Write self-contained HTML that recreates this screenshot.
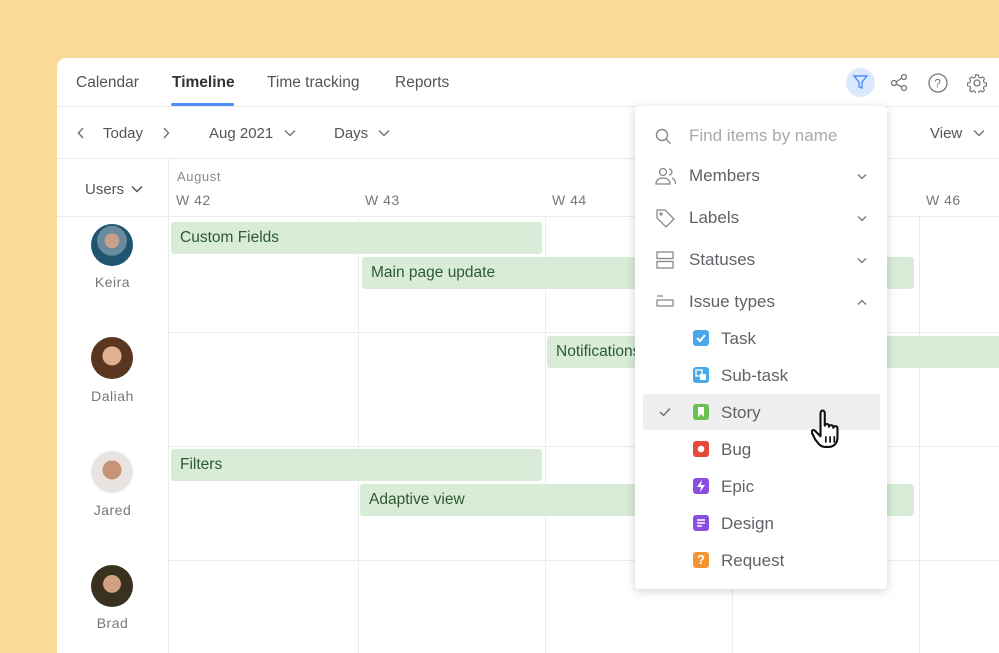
<!DOCTYPE html>
<html><head><style>
*{margin:0;padding:0;box-sizing:border-box}
body{width:999px;height:653px;overflow:hidden;background:#FBD996;font-family:"Liberation Sans",sans-serif;position:relative}
.card{position:absolute;left:57px;top:58px;width:950px;height:595px;background:#fff;border-radius:9px 9px 0 0;overflow:hidden}
.abs{position:absolute}
.t{position:absolute;color:#555;font-size:16px;white-space:nowrap}
.hl{position:absolute;height:1px;background:#ececec}
.vl{position:absolute;width:1px;background:#ececec}
.bar{position:absolute;background:#d8ecd8;border-radius:3px;color:#2d5a30;font-size:15.5px;padding-left:9px;line-height:32px;height:32px;white-space:nowrap;overflow:hidden}
.av{position:absolute;width:42px;height:42px;border-radius:50%}
.nm{position:absolute;width:111px;text-align:center;color:#777;font-size:14px;letter-spacing:.5px}
.dd{position:absolute;left:635px;top:106px;width:252px;height:483px;background:#fff;border-radius:4px;box-shadow:0 2px 10px rgba(0,0,0,.18)}
.di{position:absolute;left:54px;font-size:17px;color:#5f6368}
.ic{position:absolute;left:58px;width:16px;height:16px;border-radius:3px}
.chev{position:absolute;left:222px}
</style></head><body>
<div class="card">
 <div class="t" style="left:19px;top:16px;font-size:15.5px">Calendar</div>
 <div class="t" style="left:115px;top:16px;color:#333;font-weight:bold;font-size:15.5px">Timeline</div>
 <div class="abs" style="left:114px;top:45px;width:63px;height:3px;background:#4f8ef7;border-radius:2px"></div>
 <div class="t" style="left:210px;top:16px;font-size:15.5px">Time tracking</div>
 <div class="t" style="left:338px;top:16px;font-size:15.5px">Reports</div>
 <div class="abs" style="left:789px;top:10px;width:29px;height:29px;border-radius:50%;background:#dbe9fd"></div>
 <svg class="abs" style="left:795px;top:16px" width="17" height="17" viewBox="0 0 17 17"><path d="M2 2h13l-5 6v6l-3-1V8z" fill="none" stroke="#4f8ef7" stroke-width="1.4"/></svg>
 <svg class="abs" style="left:833px;top:15px" width="18" height="19" viewBox="0 0 18 19" fill="none" stroke="#777" stroke-width="1.3"><circle cx="4" cy="10" r="2.5"/><circle cx="14" cy="4" r="2.5"/><circle cx="14" cy="15" r="2.5"/><path d="M6 9l6-4M6 11l6 3"/></svg>
 <svg class="abs" style="left:871px;top:15px" width="20" height="20" viewBox="0 0 20 20" fill="none" stroke="#777" stroke-width="1.3"><circle cx="10" cy="10" r="9"/><text x="6.3" y="14.5" font-size="12" fill="#777" stroke="none" font-family="Liberation Sans">?</text></svg>
 <svg class="abs" style="left:910px;top:15px" width="20" height="20" viewBox="0 0 20 20" fill="none" stroke="#777" stroke-width="1.3"><circle cx="10" cy="10" r="3"/><path d="M8.5 1.5h3l.5 2.5 2 1 2.3-1.2 2 2-1.2 2.3 1 2 2.5.5v3l-2.5.5-1 2 1.2 2.3-2 2-2.3-1.2-2 1-.5 2.5h-3l-.5-2.5-2-1-2.3 1.2-2-2 1.2-2.3-1-2-2.5-.5v-3l2.5-.5 1-2-1.2-2.3 2-2 2.3 1.2 2-1z" transform="scale(.9) translate(1.1 .6)"/></svg>
 <div class="hl" style="left:0;top:48px;width:960px"></div>
 <svg class="abs" style="left:20px;top:69px" width="8" height="12" viewBox="0 0 8 12"><path d="M6 1L1.5 6 6 11" fill="none" stroke="#777" stroke-width="1.5"/></svg>
 <div class="t" style="left:46px;top:67px;font-size:15px">Today</div>
 <svg class="abs" style="left:105px;top:69px" width="8" height="12" viewBox="0 0 8 12"><path d="M2 1l4.5 5L2 11" fill="none" stroke="#777" stroke-width="1.5"/></svg>
 <div class="t" style="left:152px;top:67px;font-size:15px">Aug 2021</div>
 <svg class="abs" style="left:227px;top:71px" width="12" height="8" viewBox="0 0 12 8"><path d="M1 1.5l5 5 5-5" fill="none" stroke="#777" stroke-width="1.5"/></svg>
 <div class="t" style="left:277px;top:67px;font-size:15px">Days</div>
 <svg class="abs" style="left:321px;top:71px" width="12" height="8" viewBox="0 0 12 8"><path d="M1 1.5l5 5 5-5" fill="none" stroke="#777" stroke-width="1.5"/></svg>
 <div class="t" style="left:815px;top:67px;font-size:15px">s</div>
 <div class="t" style="left:873px;top:67px;font-size:15px">View</div>
 <svg class="abs" style="left:916px;top:71px" width="12" height="8" viewBox="0 0 12 8"><path d="M1 1.5l5 5 5-5" fill="none" stroke="#777" stroke-width="1.5"/></svg>
 <div class="hl" style="left:0;top:100px;width:960px"></div>
 <div class="vl" style="left:111px;top:100px;height:560px"></div>
 <div class="t" style="left:28px;top:123px;font-size:15px">Users</div>
 <svg class="abs" style="left:74px;top:127px" width="12" height="8" viewBox="0 0 12 8"><path d="M1 1.5l5 5 5-5" fill="none" stroke="#555" stroke-width="1.5"/></svg>
 <div class="t" style="left:120px;top:111px;font-size:13px;color:#888;letter-spacing:.6px">August</div>
 <div class="t" style="left:119px;top:134px;font-size:14px;color:#777;letter-spacing:.5px">W 42</div>
 <div class="t" style="left:308px;top:134px;font-size:14px;color:#777;letter-spacing:.5px">W 43</div>
 <div class="t" style="left:495px;top:134px;font-size:14px;color:#777;letter-spacing:.5px">W 44</div>
 <div class="t" style="left:869px;top:134px;font-size:14px;color:#777;letter-spacing:.5px">W 46</div>
 <div class="hl" style="left:0;top:158px;width:960px"></div>
 <div class="vl" style="left:301px;top:158px;height:500px"></div>
 <div class="vl" style="left:488px;top:158px;height:500px"></div>
 <div class="vl" style="left:675px;top:158px;height:500px"></div>
 <div class="vl" style="left:862px;top:158px;height:500px"></div>
 <div class="hl" style="left:111px;top:274px;width:850px"></div>
 <div class="hl" style="left:111px;top:388px;width:850px"></div>
 <div class="hl" style="left:111px;top:502px;width:850px"></div>
 <div class="av" style="left:34px;top:166px;background:radial-gradient(circle at 50% 40%,#c9a088 0 22%,#6a8aa0 23% 45%,#1f5570 46%)"></div>
 <div class="nm" style="left:0;top:216px">Keira</div>
 <div class="av" style="left:34px;top:279px;background:radial-gradient(circle at 50% 45%,#e0b090 0 30%,#5a3520 31%)"></div>
 <div class="nm" style="left:0;top:330px">Daliah</div>
 <div class="av" style="left:34px;top:393px;background:radial-gradient(circle at 50% 45%,#c89478 0 30%,#e9e4df 31%)"></div>
 <div class="nm" style="left:0;top:444px">Jared</div>
 <div class="av" style="left:34px;top:507px;background:radial-gradient(circle at 50% 45%,#d1a080 0 28%,#3a3020 29%)"></div>
 <div class="nm" style="left:0;top:557px">Brad</div>
 <div class="bar" style="left:114px;top:164px;width:371px">Custom Fields</div>
 <div class="bar" style="left:305px;top:199px;width:552px">Main page update</div>
 <div class="bar" style="left:490px;top:278px;width:480px">Notifications</div>
 <div class="bar" style="left:114px;top:391px;width:371px">Filters</div>
 <div class="bar" style="left:303px;top:426px;width:554px">Adaptive view</div>
</div>
<div class="dd">
 <svg class="abs" style="left:20px;top:22px" width="17" height="17" viewBox="0 0 17 17" fill="none" stroke="#888" stroke-width="1.4"><circle cx="7" cy="7" r="5.5"/><path d="M11 11l4.5 4.5"/></svg>
 <div class="di" style="top:20px;color:#aaa">Find items by name</div>
 <svg class="abs" style="left:20px;top:61px" width="22" height="18" viewBox="0 0 22 18" fill="none" stroke="#888" stroke-width="1.3"><circle cx="8" cy="5" r="3.5"/><path d="M1 17c0-4 3-6 7-6s7 2 7 6z"/><path d="M14 2a3 3 0 010 6M17 11c2 1 3.5 3 3.5 6"/></svg>
 <div class="di" style="top:60px">Members</div><svg class="chev" style="top:67px" width="10" height="7" viewBox="0 0 10 7"><path d="M1 1.5l4 4 4-4" fill="none" stroke="#777" stroke-width="1.3"/></svg>
 <svg class="abs" style="left:21px;top:103px" width="20" height="19" viewBox="0 0 20 19" fill="none" stroke="#888" stroke-width="1.3"><path d="M1 1h8l9 9-8 8-9-9z"/><circle cx="5" cy="5" r="1"/></svg>
 <div class="di" style="top:102px">Labels</div><svg class="chev" style="top:109px" width="10" height="7" viewBox="0 0 10 7"><path d="M1 1.5l4 4 4-4" fill="none" stroke="#777" stroke-width="1.3"/></svg>
 <svg class="abs" style="left:21px;top:145px" width="18" height="18" viewBox="0 0 18 18" fill="none" stroke="#888" stroke-width="1.3"><rect x="1" y="1" width="16" height="6.5"/><rect x="1" y="10.5" width="16" height="6.5"/></svg>
 <div class="di" style="top:144px">Statuses</div><svg class="chev" style="top:151px" width="10" height="7" viewBox="0 0 10 7"><path d="M1 1.5l4 4 4-4" fill="none" stroke="#777" stroke-width="1.3"/></svg>
 <svg class="abs" style="left:21px;top:189px" width="18" height="12" viewBox="0 0 18 12" fill="none" stroke="#888" stroke-width="1.3"><path d="M1 1h6M1 5h16v6H1z"/></svg>
 <div class="di" style="top:186px">Issue types</div><svg class="chev" style="top:193px" width="10" height="7" viewBox="0 0 10 7"><path d="M1 5.5l4-4 4 4" fill="none" stroke="#777" stroke-width="1.3"/></svg>
 <div class="abs" style="left:8px;top:288px;width:237px;height:36px;background:#efefef;border-radius:2px"></div>
 <svg class="abs" style="left:24px;top:301px" width="12" height="10" viewBox="0 0 12 10"><path d="M1 5l3.5 3.5L11 1.5" fill="none" stroke="#666" stroke-width="1.3"/></svg>
 <div class="ic" style="top:224px;background:#4aa8ea"><svg width="16" height="16"><path d="M4 8l3 3 5-6" stroke="#fff" stroke-width="2" fill="none"/></svg></div>
 <div class="di" style="top:223px;left:86px">Task</div>
 <div class="ic" style="top:261px;background:#4aa8ea"><svg width="16" height="16"><rect x="3" y="3" width="6" height="6" fill="none" stroke="#fff" stroke-width="1.3"/><rect x="7" y="7" width="6" height="6" fill="#fff"/></svg></div>
 <div class="di" style="top:260px;left:86px">Sub-task</div>
 <div class="ic" style="top:298px;background:#6cbf52"><svg width="16" height="16"><path d="M5 3h6v10l-3-3-3 3z" fill="#fff"/></svg></div>
 <div class="di" style="top:297px;left:86px">Story</div>
 <div class="ic" style="top:335px;background:#e5493a"><svg width="16" height="16"><circle cx="8" cy="8" r="3.3" fill="#fff"/></svg></div>
 <div class="di" style="top:334px;left:86px">Bug</div>
 <div class="ic" style="top:372px;background:#8a4fe0"><svg width="16" height="16"><path d="M9 2L4 9h4l-1 5 5-7H8z" fill="#fff"/></svg></div>
 <div class="di" style="top:371px;left:86px">Epic</div>
 <div class="ic" style="top:409px;background:#8a4fe0"><svg width="16" height="16"><path d="M4 5h8M4 8h8M4 11h5" stroke="#fff" stroke-width="1.4"/></svg></div>
 <div class="di" style="top:408px;left:86px">Design</div>
 <div class="ic" style="top:446px;background:#f39533;color:#fff;font-size:13px;font-weight:bold;text-align:center;line-height:16px">?</div>
 <div class="di" style="top:445px;left:86px">Request</div>
 <svg class="abs" style="left:176px;top:302px" width="36" height="46" viewBox="0 0 34 42"><path d="M9 4c0-3 4-3 4 0v12c0-2 4-2 4 0v1c0-2 4-2 4 0v1c0-2 4-2 4 0v9c0 5-3 9-8 9h-4c-4 0-6-3-9-7l-3-6c-1-2 1-4 3-2l5 5z" fill="#fff" stroke="#111" stroke-width="2" stroke-linejoin="round"/><path d="M14 26v6M18 26v6M22 26v6" stroke="#111" stroke-width="1.6"/></svg>
</div>
</body></html>
